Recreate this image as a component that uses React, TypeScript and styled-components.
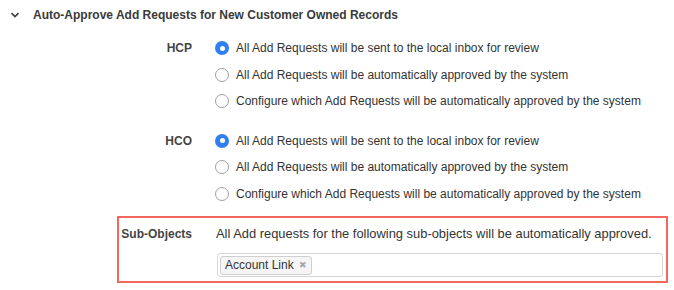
import React from 'react';
import styled, { createGlobalStyle } from 'styled-components';

const GlobalStyle = createGlobalStyle`
  body {
    margin: 0;
    background: #ffffff;
    font-family: "Liberation Sans", Arial, sans-serif;
    color: #333333;
  }
`;

const Page = styled.div`
  width: 674px;
  height: 290px;
  overflow: hidden;
  box-sizing: border-box;
`;

const SectionHeader = styled.div`
  display: flex;
  align-items: center;
  height: 30px;
  padding-left: 10px;
  gap: 13px;
  font-size: 12px;
  font-weight: bold;
  color: #3a3a3a;

  svg {
    width: 10px;
    height: 10px;
  }
`;

const Group = styled.div<{ $top: number }>`
  display: grid;
  grid-template-columns: 192px 1fr;
  column-gap: 23px;
  margin-top: ${(p) => p.$top}px;
`;

const Label = styled.div`
  text-align: right;
  font-size: 12px;
  font-weight: bold;
  color: #444444;
  line-height: 26px;
`;

const Options = styled.div`
  display: flex;
  flex-direction: column;
`;

const Option = styled.label`
  display: flex;
  align-items: center;
  height: 26.5px;
  gap: 7px;
  font-size: 12px;
  color: #333333;
`;

const Radio = styled.span<{ $checked?: boolean }>`
  width: 14px;
  height: 14px;
  border-radius: 50%;
  box-sizing: border-box;
  display: inline-flex;
  align-items: center;
  justify-content: center;
  background: ${(p) => (p.$checked ? '#2f7ff0' : '#ffffff')};
  border: ${(p) => (p.$checked ? 'none' : '1px solid #a0a0a0')};

  &::after {
    content: '';
    display: ${(p) => (p.$checked ? 'block' : 'none')};
    width: 5px;
    height: 5px;
    border-radius: 50%;
    background: #ffffff;
  }
`;

const Highlight = styled.div`
  display: grid;
  grid-template-columns: 73px 1fr;
  column-gap: 24px;
  margin: 9px 0 0 117px;
  width: 551px;
  box-sizing: border-box;
  border: 2px solid #f4675c;
  padding: 0 3px 4px 0;
`;

const SubLabel = styled(Label)`
  line-height: 14px;
  padding-top: 9px;
`;

const SubContent = styled.div`
  display: flex;
  flex-direction: column;
  padding-top: 9px;
`;

const Description = styled.div`
  font-size: 12.9px;
  line-height: 14px;
  color: #333333;
`;

const TagInput = styled.div`
  margin-top: 12px;
  margin-left: 1px;
  height: 24px;
  box-sizing: border-box;
  border: 1px solid #d6d6d6;
  border-radius: 3px;
  display: flex;
  align-items: center;
  padding-left: 2px;
`;

const Tag = styled.span`
  display: inline-flex;
  align-items: center;
  gap: 5px;
  height: 17px;
  padding: 0 4px 0 4px;
  border: 1px solid #cfcfcf;
  border-radius: 3px;
  background: #f5f5f5;
  font-size: 12px;
  color: #333333;
`;

const TagRemove = styled.span`
  font-size: 9px;
  color: #a8a8a8;
`;

const groups = [
  { name: 'HCP', top: 5 },
  { name: 'HCO', top: 13 },
];

const choices = [
  'All Add Requests will be sent to the local inbox for review',
  'All Add Requests will be automatically approved by the system',
  'Configure which Add Requests will be automatically approved by the system',
];

export default function App() {
  return (
    <Page>
      <GlobalStyle />
      <SectionHeader>
        <svg viewBox="0 0 10 10">
          <path d="M1.5 3.2 L5 6.6 L8.5 3.2" fill="none" stroke="#444" strokeWidth="1.8" />
        </svg>
        <span>Auto-Approve Add Requests for New Customer Owned Records</span>
      </SectionHeader>
      {groups.map((g) => (
        <Group key={g.name} $top={g.top}>
          <Label>{g.name}</Label>
          <Options>
            {choices.map((c, i) => (
              <Option key={c}>
                <Radio $checked={i === 0} />
                {c}
              </Option>
            ))}
          </Options>
        </Group>
      ))}
      <Highlight>
        <SubLabel>Sub-Objects</SubLabel>
        <SubContent>
          <Description>All Add requests for the following sub-objects will be automatically approved.</Description>
          <TagInput>
            <Tag>
              Account Link
              <TagRemove>✖</TagRemove>
            </Tag>
          </TagInput>
        </SubContent>
      </Highlight>
    </Page>
  );
}
